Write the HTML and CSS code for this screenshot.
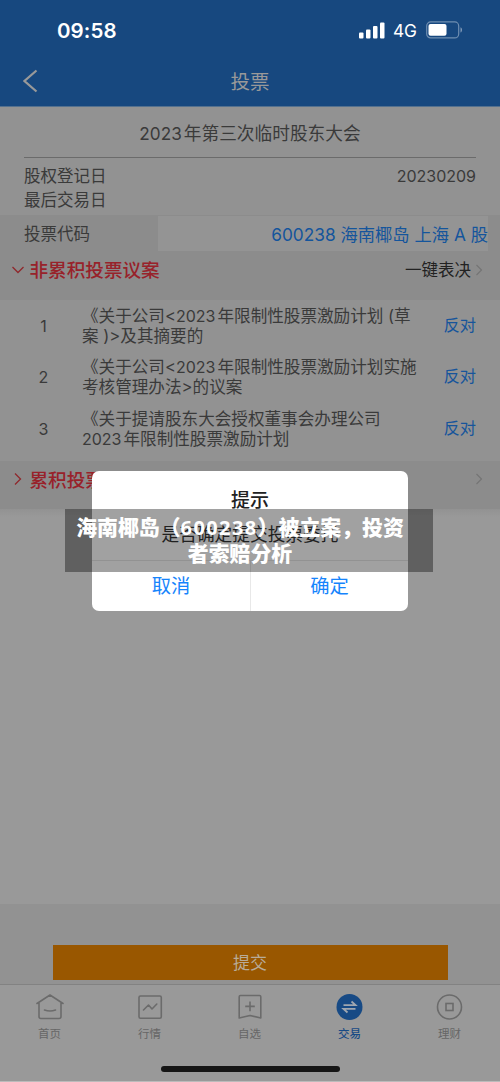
FILE: index.html
```html
<!DOCTYPE html>
<html lang="zh-CN">
<head>
<meta charset="utf-8">
<title>投票</title>
<link rel="stylesheet" href="styles.css">
</head>
<body>
<div class="screen">
  <header class="header">
    <div class="status">
      <span class="clock">09:58</span>
      <div class="status-right">
        <svg class="signal" width="26" height="17" viewBox="0 0 26 17" fill="#fff"><rect x="0" y="10.5" width="4.5" height="6" rx="1"/><rect x="7" y="7.5" width="4.5" height="9" rx="1"/><rect x="14" y="4" width="4.5" height="12.5" rx="1"/><rect x="21" y=".5" width="4.5" height="16" rx="1"/></svg>
        <span class="network">4G</span>
        <svg class="battery" width="37" height="18" viewBox="0 0 37 18"><rect x=".7" y=".9" width="32" height="16" rx="4" fill="none" stroke="#6f8eb1" stroke-width="1.2"/><rect x="2.5" y="3" width="18" height="11.7" rx="2" fill="#fff"/><path d="M34.5 6.2c2 .7 2 4.6 0 5.3z" fill="#8099b8"/></svg>
      </div>
    </div>
    <div class="nav">
      <svg class="back" width="16" height="24" viewBox="0 0 16 24"><path d="M13.500 1.500 1.500 12l12 10.500" fill="none" stroke="#999" stroke-width="2.200"/></svg>
      <h1 class="nav-title">投票</h1>
    </div>
  </header>

  <section class="meeting">
    <h2 class="meeting-title"><span class="num">2023</span>年第三次临时股东大会</h2>
    <div class="row"><span>股权登记日</span><span class="date">20230209</span></div>
    <div class="row"><span>最后交易日</span></div>
  </section>

  <div class="code-row">
    <span class="code-label">投票代码</span>
    <span class="code-value">600238 海南椰岛 上海 A 股</span>
  </div>

  <div class="group">
    <svg class="caret" width="14" height="14" viewBox="0 0 14 14"><path d="m1.5 4 5.5 5.5L12.500 4" fill="none" stroke="#8f282c" stroke-width="1.3"/></svg>
    <h3 class="group-title">非累积投票议案</h3>
    <span class="group-action">一键表决</span>
    <svg class="chevron" width="8" height="14" viewBox="0 0 8 14"><path d="m1.500 2 5 5-5 5" fill="none" stroke="#747474" stroke-width="1.1"/></svg>
  </div>

  <ol class="proposals">
    <li class="proposal"><span class="index">1</span><p class="text"><span class="line first">《关于公司&lt;<span class="year">2023</span>年限制性股票激励计划 (草</span><span class="line">案 )&gt;及其摘要的</span></p><a class="vote">反对</a></li>
    <li class="proposal"><span class="index">2</span><p class="text"><span class="line first">《关于公司&lt;<span class="year">2023</span>年限制性股票激励计划实施</span><span class="line">考核管理办法&gt;的议案</span></p><a class="vote">反对</a></li>
    <li class="proposal"><span class="index">3</span><p class="text"><span class="line first">《关于提请股东大会授权董事会办理公司</span><span class="line"><span class="year">2023</span>年限制性股票激励计划</span></p><a class="vote">反对</a></li>
  </ol>

  <div class="group second">
    <svg class="caret" width="14" height="14" viewBox="0 0 14 14"><path d="m4 1.500 5.500 5.500L4 12.500" fill="none" stroke="#8f282c" stroke-width="1.3"/></svg>
    <h3 class="group-title">累积投票议案</h3>
    <svg class="chevron" width="8" height="14" viewBox="0 0 8 14"><path d="m1.500 2 5 5-5 5" fill="none" stroke="#747474" stroke-width="1.1"/></svg>
  </div>

  <main class="blank"></main>

  <div class="submit-bar"><button class="submit">提交</button></div>

  <nav class="tabs">
    <a class="tab"><svg width="28" height="28" viewBox="0 0 28 28" fill="none" stroke="#6b6b6b" stroke-width="1.6" stroke-linecap="round" stroke-linejoin="round"><path d="M1 10.500 14 2l13 8.500M3 10v13.500q0 2 2 2h18q2 0 2-2V10M8.500 17q5.500 2 11 0"/></svg><span>首页</span></a>
    <a class="tab"><svg width="28" height="28" viewBox="0 0 28 28" fill="none" stroke="#6b6b6b" stroke-width="1.6" stroke-linecap="round" stroke-linejoin="round"><rect x="3" y="3" width="22.300" height="22.300" rx="1.500"/><path d="m7.500 17 5-5 3.500 4 4.800-5"/></svg><span>行情</span></a>
    <a class="tab"><svg width="28" height="28" viewBox="0 0 28 28" fill="none" stroke="#6b6b6b" stroke-width="1.600" stroke-linejoin="round"><path d="M4.500 2.500h19q1.300 0 1.300 1.300V25L14 22.500 3.200 25V3.800q0-1.300 1.300-1.300M14 8.500v9.800M9.200 13.400h9.600"/></svg><span>自选</span></a>
    <a class="tab active"><svg width="28" height="28" viewBox="0 0 28 28"><circle cx="13.500" cy="14" r="13" fill="#174a85"/><path d="M7.500 12.100h12l-4-3.600M19.500 15.900h-12l4 3.600" fill="none" stroke="#a0a7b0" stroke-width="1.800"/></svg><span>交易</span></a>
    <a class="tab"><svg width="28" height="28" viewBox="0 0 28 28" fill="none" stroke="#6b6b6b" stroke-width="1.600"><circle cx="13.500" cy="14" r="12"/><rect x="10" y="10.500" width="7" height="7"/></svg><span>理财</span></a>
  </nav>
  <div class="home-indicator"></div>

  <div class="dialog">
    <h2 class="dialog-title">提示</h2>
    <p class="dialog-message">是否确定提交投票委托</p>
    <div class="dialog-actions"><button class="dialog-button">取消</button><button class="dialog-button">确定</button></div>
  </div>
  <div class="caption"><span>海南椰岛（<span class="caption-num">600238</span>）被立案，投资</span><span>者索赔分析</span></div>
</div>
</body>
</html>
```

FILE: styles.css
```css
* { box-sizing: border-box; }
body, h1, h2, h3, p, ol { margin: 0; padding: 0; }
body { font-family: Inter, "Noto Sans CJK SC", sans-serif; background: #999; }
button { border: 0; background: none; padding: 0; font: inherit; }
svg { display: block; flex: none; }
.screen { position: relative; width: 500px; height: 1082px; display: flex; flex-direction: column; overflow: hidden; background: #999; color: #3a3a3a; white-space: nowrap; border-bottom: 1px solid #bbb; }

.header { height: 107px; flex: none; background: #17487f; border-bottom: 1px solid #54718f; }
.status { height: 60px; display: flex; align-items: center; justify-content: space-between; padding: 0 37px 0 57px; color: #fff; }
.clock { font-size: 20.500px; font-weight: 600; letter-spacing: .1px; }
.status-right { display: flex; align-items: center; }
.network { font-size: 17.300px; font-weight: 400; margin: 1px 9px 0 8px; letter-spacing: 0; }
.nav { height: 42px; display: grid; grid-template-columns: 60px 1fr 60px; align-items: center; }
.back { margin-left: 23px; }
.nav-title { font-size: 19.500px; line-height: 28px; padding-top: 1px; font-weight: 400; color: #999; text-align: center; }

.meeting { height: 108px; flex: none; padding: 0 24px; background: #929292; }
.meeting-title { height: 51px; line-height: 53px; border-bottom: 1px solid #6b6b6b; margin-bottom: 7px; font-size: 17.700px; font-weight: 400; text-align: center; }
.num { font-size: 17.200px; margin-right: 2px; }
.row { height: 23.500px; line-height: 23.500px; display: flex; justify-content: space-between; font-size: 16.500px; }
.date { font-size: 16px; line-height: 23px; }

.code-row { height: 37px; flex: none; display: flex; background: #8c8c8c; padding: 1px 12px 1px 24px; font-size: 16.500px; line-height: 36px; }
.code-label { width: 133.500px; }
.code-value { flex: 1; background: #949494; color: #14559c; text-align: right; font-size: 17.300px; line-height: 37px; }

.group { height: 48px; flex: none; display: flex; align-items: flex-start; padding: 4px 17px 0 11px; background: #8c8c8c; line-height: 29px; }
.caret { margin: 7px 4.500px 0 0; }
.group-title { font-size: 18.600px; line-height: 29px; font-weight: 500; color: #98222a; }
.group-action { margin-left: auto; font-size: 16.500px; color: #222; }
.chevron { margin: 7px 0 0 4px; }
.second .group-title { line-height: 30px; }
.second .chevron { margin-left: auto; }

.proposals { height: 161px; flex: none; background: #929292; padding-top: 6px; list-style: none; }
.proposal { height: 51.300px; display: grid; grid-template-columns: 82px 1fr 80px; }
.index { padding: 9px 0 0 5px; text-align: center; font-size: 16px; line-height: 22px; }
.text { font-size: 16.600px; line-height: 20px; }
.line { display: block; }
.year { font-size: 16px; margin-right: 2px; }
.vote { padding: 8px 24px 0 0; text-align: right; color: #17559b; font-size: 16.300px; line-height: 23px; }

.blank { flex: 1; background: linear-gradient(#929292, #999 8px); }
.submit-bar { height: 80px; flex: none; padding: 41px 52.500px 0; background: #929292; }
.submit { display: block; width: 100%; height: 35px; background: #995700; color: #b8ab98; font-size: 17px; line-height: 37px; }
.tabs { height: 75px; flex: none; display: grid; grid-template-columns: repeat(5, 100px); border-top: 1px solid #828282; padding-top: 8px; }
.tab { display: flex; flex-direction: column; align-items: center; font-size: 11.500px; line-height: 20px; gap: 3px; color: #666; }
.tab span { margin-left: -1px; }
.active { color: #174a85; font-weight: 500; }
.home-indicator { width: 179px; height: 6px; flex: none; margin: 7px auto 9px; border-radius: 3px; background: #161616; }

.dialog { position: absolute; left: 92px; top: 471px; width: 316px; height: 140px; border-radius: 7px; background: #fff; text-align: center; overflow: hidden; }
.dialog-title { height: 48px; padding-top: 15px; font-size: 19px; line-height: 29px; font-weight: 500; color: #222; }
.dialog-message { height: 41px; font-size: 17.700px; line-height: 32px; color: #333; }
.dialog-actions { height: 51px; display: grid; grid-template-columns: 1fr 1fr; border-top: 1px solid #e8e8e8; }
.dialog-button { color: #1684fc; font-size: 19.300px; line-height: 50px; }
.dialog-button + .dialog-button { border-left: 1px solid #e8e8e8; }
.caption { position: absolute; left: 65px; top: 509px; width: 368px; height: 63px; padding: 4px 18px 0 0; display: flex; flex-direction: column; align-items: center; background: rgba(0, 0, 0, .37); color: #fff; font-family: "Noto Sans CJK SC", sans-serif; font-size: 20.900px; line-height: 26px; font-weight: 900; }
.caption-num { font-family: "Open Sans", "Noto Sans", sans-serif; font-size: 20px; line-height: 1; font-weight: 700; letter-spacing: 1.400px; }
```
